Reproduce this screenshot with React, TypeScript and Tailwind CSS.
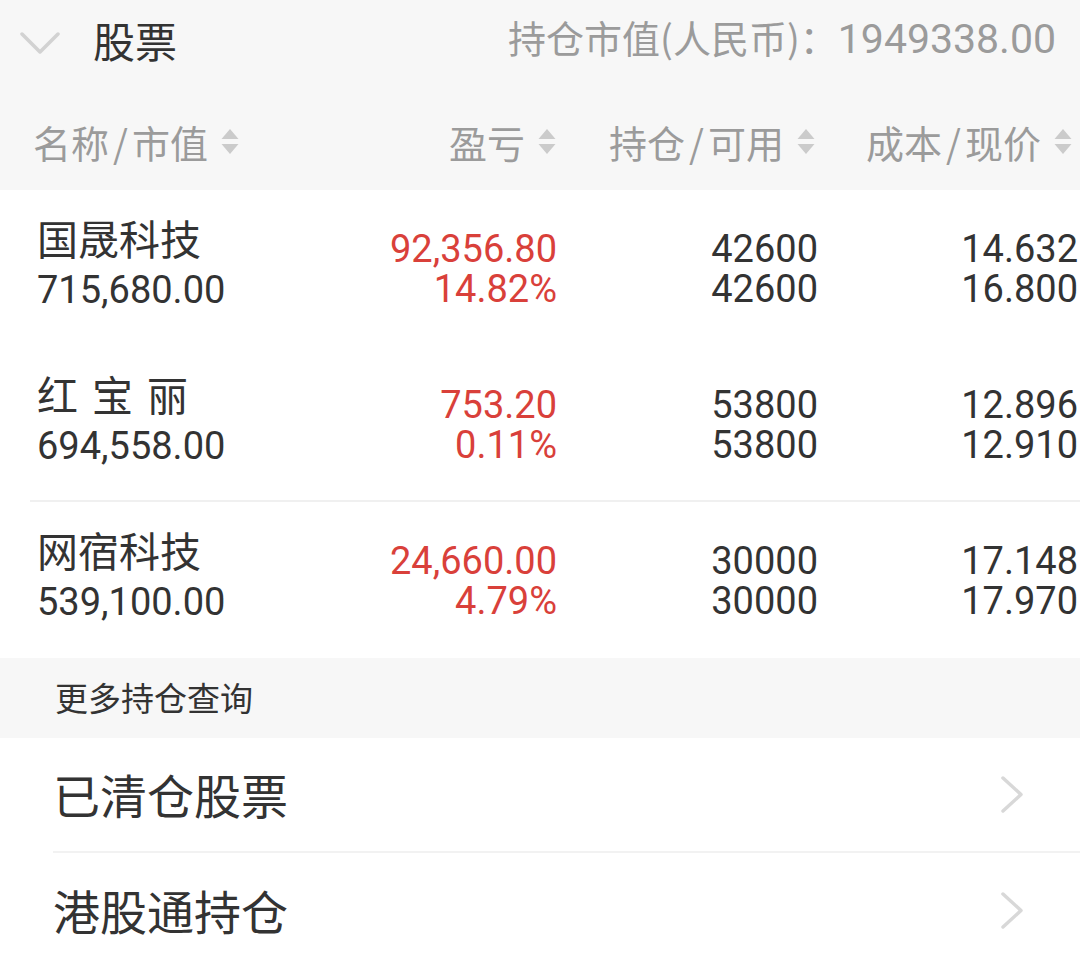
import React from 'react';

const cjk = '"Noto Sans CJK SC", "Noto Sans", sans-serif';
const num = 'Roboto, "Noto Sans CJK SC", sans-serif';

type Stock = {
  name: string;
  value: string;
  pnl: string;
  pct: string;
  hold: string;
  avail: string;
  cost: string;
  price: string;
  line?: boolean;
};

const stocks: Stock[] = [
  { name: '国晟科技', value: '715,680.00', pnl: '92,356.80', pct: '14.82%', hold: '42600', avail: '42600', cost: '14.632', price: '16.800' },
  { name: '红 宝 丽', value: '694,558.00', pnl: '753.20', pct: '0.11%', hold: '53800', avail: '53800', cost: '12.896', price: '12.910', line: true },
  { name: '网宿科技', value: '539,100.00', pnl: '24,660.00', pct: '4.79%', hold: '30000', avail: '30000', cost: '17.148', price: '17.970' },
];

const SortIcon = () => (
  <svg width="18" height="25" viewBox="0 0 18 25" className="shrink-0">
    <path d="M9 0 L17.5 10 H0.5 Z" fill="#cbcbcb" />
    <path d="M0.5 15 H17.5 L9 25 Z" fill="#cbcbcb" />
  </svg>
);

const ChevronRight = () => (
  <svg width="22" height="37" viewBox="0 0 22 37" fill="none">
    <path d="M2 2 L20 18.5 L2 35" stroke="#d8d8d8" strokeWidth="3.5" strokeLinecap="round" strokeLinejoin="round" />
  </svg>
);

// 表头一格: 文字 + 排序三角
const HeadCell = ({ a, b, className }: { a: string; b?: string; className: string }) => (
  <div className={`flex items-center gap-[13px] ${className}`}>
    <span>
      {a}
      {b && (
        <>
          <span className="mx-[4px]">/</span>
          {b}
        </>
      )}
    </span>
    <SortIcon />
  </div>
);

// 三字股票名中间留空
const StockName = ({ name }: { name: string }) => {
  const parts = name.split(' ');
  return (
    <div className="text-[41px] leading-[50px] whitespace-nowrap">
      {parts.map((p, i) => (
        <React.Fragment key={i}>
          {i > 0 && <span className="inline-block w-[14px]" />}
          {p}
        </React.Fragment>
      ))}
    </div>
  );
};

export default function App() {
  return (
    <div className="w-[1080px] h-[963px] overflow-hidden bg-white" style={{ fontFamily: cjk }}>
      {/* 标题 */}
      <div className="h-[95px] bg-[#f7f7f7] flex items-center pl-[20px] pr-[24px]">
        <svg width="40" height="24" viewBox="0 0 40 24" fill="none" className="mb-[10px]">
          <path d="M2 3 L20 21 L38 3" stroke="#d2d2d2" strokeWidth="3.5" strokeLinecap="round" strokeLinejoin="round" />
        </svg>
        <span className="ml-[33px] text-[42px] text-[#333] leading-none mb-[16px]">股票</span>
        <span className="ml-auto text-[38px] text-[#9b9b9b] leading-none mb-[18px]">
          持仓市值(人民币)：<span className="text-[41px]" style={{ fontFamily: num }}>1949338.00</span>
        </span>
      </div>

      {/* 表头 */}
      <div className="h-[95px] bg-[#f7f7f7] flex items-center text-[38px] text-[#9b9b9b] leading-none pb-[2px]">
        <HeadCell a="名称" b="市值" className="pl-[33px] w-[300px]" />
        <HeadCell a="盈亏" className="justify-end w-[256px]" />
        <HeadCell a="持仓" b="可用" className="justify-end w-[259px]" />
        <HeadCell a="成本" b="现价" className="justify-end w-[257px]" />
      </div>

      {/* 持仓列表 */}
      <div>
        {stocks.map((s) => (
          <div key={s.name} className="relative h-[156px] flex text-[#333]">
            <div className="w-[300px] pl-[37px] pt-[22px]">
              <StockName name={s.name} />
              <div className="text-[38px] leading-[56px]" style={{ fontFamily: num }}>{s.value}</div>
            </div>
            <div className="w-[257px] pt-[39px] text-right text-[38px] leading-[40px] text-[#d9403a]" style={{ fontFamily: num }}>
              <div>{s.pnl}</div>
              <div>{s.pct}</div>
            </div>
            <div className="w-[261px] pt-[39px] text-right text-[38px] leading-[40px]" style={{ fontFamily: num }}>
              <div>{s.hold}</div>
              <div>{s.avail}</div>
            </div>
            <div className="w-[260px] pt-[39px] text-right text-[38px] leading-[40px]" style={{ fontFamily: num }}>
              <div>{s.cost}</div>
              <div>{s.price}</div>
            </div>
            {s.line && <div className="absolute left-[30px] right-0 bottom-0 h-[2px] bg-[#f0f0f0]" />}
          </div>
        ))}
      </div>

      {/* 更多持仓查询 */}
      <div className="h-[80px] bg-[#f7f7f7] flex items-center pl-[55px] text-[33px] text-[#333]">
        更多持仓查询
      </div>

      <div className="pl-[53px]">
        <div className="h-[115px] flex items-center justify-between pr-[57px] border-b-2 border-[#f2f2f2]">
          <span className="text-[47px] text-[#333]">已清仓股票</span>
          <ChevronRight />
        </div>
        <div className="h-[115px] flex items-center justify-between pr-[57px]">
          <span className="text-[47px] text-[#333]">港股通持仓</span>
          <ChevronRight />
        </div>
      </div>
    </div>
  );
}
